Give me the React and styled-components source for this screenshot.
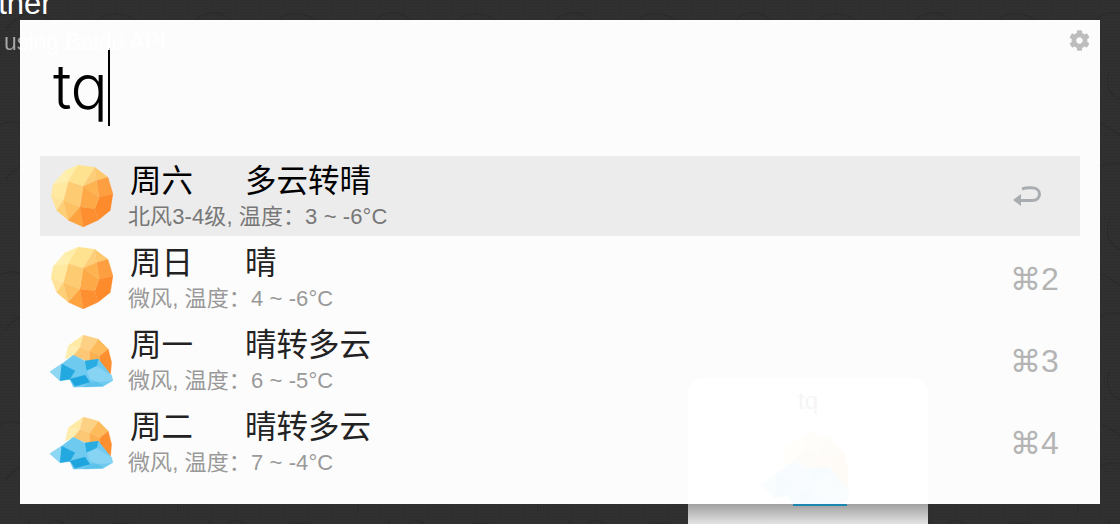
import React from "react";
import styled, { createGlobalStyle } from "styled-components";
import { FaCog } from "react-icons/fa";

const Global = createGlobalStyle`
  html, body { margin: 0; padding: 0; background: #2f2f2f; }
  body { font-family: "Liberation Sans", "Noto Sans CJK SC", sans-serif; }
`;

const Desktop = styled.div`
  position: relative;
  width: 1120px;
  height: 524px;
  overflow: hidden;
  background: #303030;
  padding: 20px;
  box-sizing: border-box;
`;

const Texture = styled.svg`
  position: absolute;
  inset: 0;
  width: 100%;
  height: 100%;
`;

const PageTitle = styled.div`
  position: absolute;
  left: -65px;
  top: -16px;
  color: #fff;
  font-size: 31px;
  line-height: 40px;
  white-space: nowrap;
`;

const PageSub = styled.div`
  position: absolute;
  z-index: 2;
  left: 4px;
  top: 29px;
  font-size: 23px;
  line-height: 26px;
  white-space: nowrap;
  color: transparent;
  background: linear-gradient(to right, #a8a8a8 16px, #ffffff 16px);
  -webkit-background-clip: text;
  background-clip: text;
`;

const PreviewCard = styled.div`
  position: absolute;
  z-index: 2;
  left: 688px;
  top: 378px;
  width: 240px;
  height: 146px;
  border-radius: 16px 16px 0 0;
  background: linear-gradient(to bottom, #fff 0, #fff 126px, #a0a0a0 126px, #e2e2e2 146px);
  text-align: center;
  overflow: hidden;
`;

const PreviewLabel = styled.div`
  color: #f6f6f6;
  font-size: 24px;
  line-height: 26px;
  padding-top: 10px;
`;

const PreviewGlyph = styled.div`
  position: absolute;
  left: 72px;
  top: 54px;
  height: 72px;
  overflow: hidden;
  opacity: 0.035;
`;

const PreviewDock = styled.div`
  position: absolute;
  left: 105px;
  top: 126px;
  width: 54px;
  height: 2px;
  background: #1c88b0;
`;

const Panel = styled.main`
  position: relative;
  width: 1080px;
  height: 484px;
  box-sizing: border-box;
  padding: 0 20px;
  background: #fcfcfc;
  display: flex;
  flex-direction: column;
`;

const GearSlot = styled.div`
  position: absolute;
  right: 10px;
  top: 10px;
  width: 21px;
  height: 21px;
  color: #bdbdbd;
  font-size: 21px;
  line-height: 0;
`;

const QueryRow = styled.div`
  height: 136px;
  display: flex;
  align-items: flex-start;
  padding: 28px 0 0 13px;
  box-sizing: border-box;
`;

const Query = styled.div`
  font-family: "Inter", "Liberation Sans", sans-serif;
  font-size: 62px;
  line-height: 78px;
  font-weight: 300;
  color: #000;
  letter-spacing: -0.5px;
  width: 55px;
  white-space: nowrap;
`;

const Caret = styled.div`
  width: 2px;
  height: 78px;
  background: #000;
`;

const List = styled.ul`
  list-style: none;
  margin: 0;
  padding: 0;
  display: flex;
  flex-direction: column;
  gap: 2px;
`;

const Row = styled.li`
  height: 80px;
  display: flex;
  align-items: center;
  background: ${(p) => (p.$active ? "#ececec" : "transparent")};
`;

const IconBox = styled.div`
  width: 88px;
  height: 80px;
  flex: none;
  display: flex;
  align-items: center;
  padding: ${(p) => (p.$cloud ? "4px 0 0 10px" : "0 0 0 11px")};
  box-sizing: border-box;
`;

const Text = styled.div`
  flex: 1;
  min-width: 0;
`;

const Title = styled.div`
  font-size: 31.5px;
  line-height: 36px;
  color: ${(p) => (p.$active ? "#000" : "#222")};
  display: flex;
  padding-left: 2px;
`;

const Day = styled.span`
  width: 115px;
`;

const Sub = styled.div`
  font-size: 22px;
  line-height: 26px;
  letter-spacing: 0.1px;
  margin-top: 5px;
  color: ${(p) => (p.$active ? "#777" : "#999")};
`;

const Shortcut = styled.div`
  width: 80px;
  flex: none;
  padding: 2px 0 0 10px;
  box-sizing: border-box;
  font-size: 31px;
  line-height: 36px;
  color: #b4b4b4;
  font-family: "DejaVu Sans", "Liberation Sans", sans-serif;
  display: flex;
  align-items: center;
`;

const Num = styled.span`
  font-family: "Liberation Sans", sans-serif;
  font-size: 32px;
`;

const ReturnIcon = styled.svg`
  width: 29px;
  height: 24px;
  margin: 0 0 0 3px;
`;

function Sun() {
  const f = [
    ["#ffefb0", "40,85 75,45 85,78"],
    ["#ffeea8", "75,45 115,28 85,78"],
    ["#ffe28f", "115,28 165,35 130,92 85,78"],
    ["#fdcd77", "165,35 170,75 130,92"],
    ["#fdc76c", "165,35 205,65 170,75"],
    ["#fd9e40", "205,65 220,115 178,125 170,75"],
    ["#fd8b2c", "220,115 212,165 175,195 165,160 178,125"],
    ["#fdb350", "130,92 170,75 178,125"],
    ["#fda947", "130,92 178,125 165,160 120,155"],
    ["#fdcc72", "85,78 130,92 120,155 70,135"],
    ["#ffe9a0", "33,120 40,85 85,78 70,135"],
    ["#ffe39a", "33,120 70,135 50,165"],
    ["#fdd078", "50,165 70,135 85,195"],
    ["#fdc062", "70,135 120,155 85,195"],
    ["#fda33f", "85,195 120,155 130,215"],
    ["#fd8f30", "120,155 165,160 175,195 130,215"],
  ];
  return (
    <svg width="62" height="62" viewBox="33 28 187 187">
      {f.map(([c, p]) => <polygon key={p} fill={c} stroke={c} strokeWidth="0.6" points={p} />)}
    </svg>
  );
}

function Cloudy({ width = 64 }) {
  const f = [
    ["#ffe9a3", "85,60 130,28 120,65"],
    ["#ffedb0", "75,100 85,60 120,65 100,90"],
    ["#fdd183", "130,28 175,40 150,75 120,65"],
    ["#fdbb5c", "175,40 205,70 180,90 150,75"],
    ["#fdc875", "120,65 150,75 150,110 100,90"],
    ["#fdb04f", "150,75 180,90 178,125 150,110"],
    ["#fd8f30", "205,70 215,110 212,145 178,125 180,90"],
    ["#6fcaef", "30,138 65,115 100,88 140,108 175,100 215,150 218,165 190,182 100,185 90,162 60,165"],
    ["#8dd6f4", "30,138 65,115 60,165"],
    ["#23a8e0", "65,115 105,135 90,160 60,165"],
    ["#29ace2", "135,105 175,100 170,122 140,135"],
    ["#86d3f3", "140,135 170,122 215,150 218,165 175,170 150,160"],
    ["#1ea5de", "90,160 135,148 150,170 105,182"],
    ["#5cc2ec", "150,170 175,170 190,182 130,184"],
  ];
  return (
    <svg width={width} height={(width * 54) / 64} viewBox="30 28 192 162">
      {f.map(([c, p]) => <polygon key={p} fill={c} stroke={c} strokeWidth="0.6" points={p} />)}
    </svg>
  );
}

const items = [
  { day: "周六", w: "多云转晴", sub: "北风3-4级, 温度：3 ~ -6°C", cloud: false, key: "enter" },
  { day: "周日", w: "晴", sub: "微风, 温度：4 ~ -6°C", cloud: false, key: "2" },
  { day: "周一", w: "晴转多云", sub: "微风, 温度：6 ~ -5°C", cloud: true, key: "3" },
  { day: "周二", w: "晴转多云", sub: "微风, 温度：7 ~ -4°C", cloud: true, key: "4" },
];

export default function App() {
  return (
    <Desktop>
      <Global />
      <Texture viewBox="0 0 1120 524" aria-hidden="true">
        <defs>
          <pattern id="weave" width="3" height="3" patternUnits="userSpaceOnUse">
            <rect width="3" height="3" fill="#303030" />
            <rect width="1" height="1" fill="#2a2a2a" />
          </pattern>
          <pattern id="damask" width="180" height="150" patternUnits="userSpaceOnUse">
            <g fill="none" stroke="#252525" strokeWidth="1.6" opacity="0.5">
              <path d="M5 30 C25 5 50 10 55 30 C60 50 85 50 95 25 C100 12 125 8 140 25" />
              <path d="M30 70 C20 90 40 110 60 95 C75 85 65 65 50 72" />
              <path d="M100 80 C120 65 150 75 150 100 C150 120 125 130 110 115" />
              <circle cx="95" cy="120" r="7" />
              <circle cx="107" cy="112" r="5" />
              <path d="M0 125 C15 115 35 130 50 145" />
              <path d="M160 45 C172 35 180 50 178 62" />
            </g>
          </pattern>
        </defs>
        <rect width="1120" height="524" fill="url(#weave)" />
        <rect width="1120" height="524" fill="url(#damask)" />
      </Texture>
      <PageTitle>Weather</PageTitle>
      <Panel>
        <GearSlot><FaCog /></GearSlot>
        <QueryRow>
          <Query>tq</Query>
          <Caret />
        </QueryRow>
        <List>
          {items.map((it, i) => (
            <Row key={it.day} $active={i === 0}>
              <IconBox $cloud={it.cloud}>{it.cloud ? <Cloudy /> : <Sun />}</IconBox>
              <Text>
                <Title $active={i === 0}>
                  <Day>{it.day}</Day>
                  <span>{it.w}</span>
                </Title>
                <Sub $active={i === 0}>{it.sub}</Sub>
              </Text>
              <Shortcut>
                {it.key === "enter" ? (
                  <ReturnIcon viewBox="0 0 29 24" fill="none">
                    <path d="M9 4C12 2.800 16 2.500 19 2.800C29 3 29 15.500 19 15.500H6" stroke="#a9adb2" strokeWidth="3" />
                    <path d="M0 15l8-6v12z" fill="#a9adb2" />
                  </ReturnIcon>
                ) : (
                  <>⌘<Num>{it.key}</Num></>
                )}
              </Shortcut>
            </Row>
          ))}
        </List>
      </Panel>
      <PageSub>using Baidu API</PageSub>
      <PreviewCard>
        <PreviewLabel>tq</PreviewLabel>
        <PreviewGlyph><Cloudy width={92} /></PreviewGlyph>
        <PreviewDock />
      </PreviewCard>
    </Desktop>
  );
}
